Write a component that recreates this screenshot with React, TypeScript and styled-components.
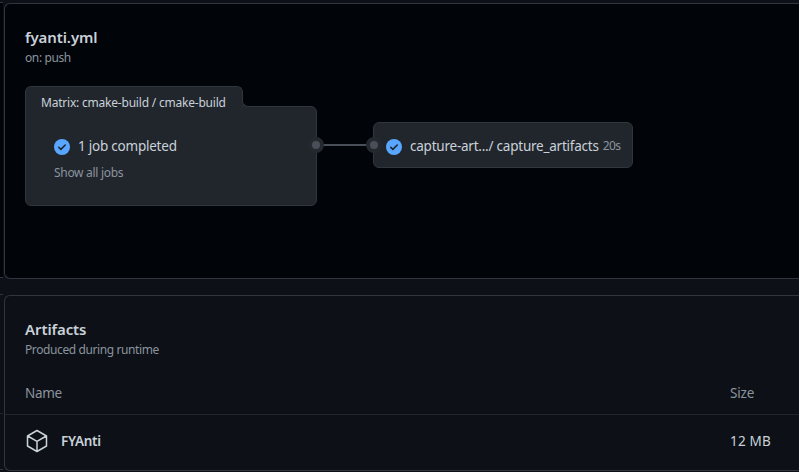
import React from 'react';
import styled, { createGlobalStyle } from 'styled-components';

const GlobalStyle = createGlobalStyle`
  * { box-sizing: border-box; }
  body {
    margin: 0;
    overflow: hidden;
    background: #0d1117;
    color: #c9d1d9;
    font-family: 'Noto Sans', sans-serif;
    font-size: 14px;
    line-height: 21px;
  }
`;

const Page = styled.main`
  display: flex;
  width: 799px;
  height: 472px;
  overflow: hidden;
`;

const Gutter = styled.div`
  flex: 0 0 3px;
  margin-right: 1px;
  padding-top: 2px;
`;

const GutterPanel = styled.div<{ $height: number; $dark?: boolean }>`
  height: ${p => p.$height}px;
  margin-bottom: 16px;
  border: solid #30363d;
  border-width: 1px 0;
  background: ${p => (p.$dark ? '#010409' : 'transparent')};
`;

const GutterRule = styled.div`
  height: 119px;
  border-bottom: 1px solid #21262d;
`;

const Content = styled.div`
  flex: 1;
  min-width: 0;
  display: flex;
  flex-direction: column;
  gap: 16px;
  padding-top: 3px;
`;

const Card = styled.section<{ $height: number; $dark?: boolean }>`
  height: ${p => p.$height}px;
  flex: none;
  border: 1px solid #30363d;
  border-right: 0;
  border-radius: 6px 0 0 6px;
  background: ${p => (p.$dark ? '#010409' : '#0d1117')};
`;

const CardHeader = styled.header`
  padding: 21px 20px 0;
`;

const Title = styled.h2`
  margin: 0;
  font-size: 15px;
  line-height: 24px;
  letter-spacing: -0.1px;
  font-weight: 600;
`;

const Subtitle = styled.div`
  font-size: 12px;
  line-height: 18px;
  letter-spacing: -0.4px;
  color: #8b949e;
`;

const Graph = styled.div`
  display: flex;
  align-items: flex-start;
  padding: 19px 0 0 20px;
`;

const Matrix = styled.div`
  width: 292px;
`;

const MatrixTab = styled.div`
  position: relative;
  z-index: 1;
  width: 218px;
  height: 21px;
  margin-bottom: -1px;
  padding: 0 15px;
  border: 1px solid #30363d;
  border-bottom: 0;
  border-radius: 6px 6px 0 0;
  background: #21262d;
  font-size: 12px;
  line-height: 32px;
  letter-spacing: -0.21px;
  white-space: nowrap;

  &::after {
    content: '';
    position: absolute;
    left: 216px;
    bottom: 0;
    width: 6px;
    height: 6px;
    border: solid #30363d;
    border-width: 0 0 1px 1px;
    border-radius: 0 0 0 6px;
    background: #010409;
    box-shadow: -1px 1px 0 0 #21262d;
    clip-path: inset(0);
  }
`;

const MatrixBody = styled.div`
  position: relative;
  height: 100px;
  padding: 29px 28px 0;
  border: 1px solid #30363d;
  border-radius: 0 6px 6px 6px;
  background: #21262d;
`;

const JobLine = styled.div`
  display: flex;
  align-items: center;
  white-space: nowrap;
  font-size: 13.5px;
  letter-spacing: -0.23px;

  svg { flex: none; margin-right: 8px; }
`;

const ShowAll = styled.div`
  margin-top: 7px;
  font-size: 12px;
  line-height: 18px;
  letter-spacing: -0.3px;
  color: #8b949e;
`;

const Port = styled.span<{ $side: 'left' | 'right'; $top: number }>`
  position: absolute;
  ${p => p.$side}: -8px;
  top: ${p => p.$top}px;
  width: 16px;
  height: 16px;
  border: 4px solid #24292f;
  border-radius: 50%;
  background: #484f58;
`;

const Connector = styled.div`
  width: 56px;
  height: 2px;
  margin-top: 58px;
  background: #484f58;
`;

const JobCard = styled.div`
  position: relative;
  display: flex;
  align-items: center;
  width: 260px;
  height: 46px;
  margin-top: 36px;
  padding: 3px 12px 0;
  border: 1px solid #30363d;
  border-radius: 6px;
  background: #21262d;
`;

const Duration = styled.span`
  margin: -2px 0 0 4px;
  font-size: 12px;
  letter-spacing: -0.6px;
  color: #8b949e;
`;

const Row = styled.div<{ $header?: boolean }>`
  display: flex;
  align-items: center;
  height: ${p => (p.$header ? 43 : 55)}px;
  margin-top: ${p => (p.$header ? 13 : 0)}px;
  padding: 0 0 ${p => (p.$header ? 0 : 2)}px 20px;
  border-bottom: ${p => (p.$header ? '1px solid #21262d' : '0')};
  color: ${p => (p.$header ? '#8b949e' : '#c9d1d9')};
  font-size: 13.5px;

  svg { margin: -2px 12px 0 0; }
`;

const NameCell = styled.div<{ $strong?: boolean }>`
  flex: 1;
  display: flex;
  align-items: center;
  letter-spacing: -0.3px;
  font-weight: ${p => (p.$strong ? 600 : 400)};
`;

const SizeCell = styled.div<{ $wide?: boolean }>`
  width: 69px;
  letter-spacing: ${p => (p.$wide ? 0.2 : -0.2)}px;
`;

const CheckIcon = () => (
  <svg width="16" height="16" viewBox="0 0 16 16" fill="none">
    <circle cx="8" cy="8" r="8" fill="#58a6ff" />
    <path d="m4.75 8.3 2.1 2.1 4.4-4.4" stroke="#21262d" strokeWidth="1.6" strokeLinecap="round" strokeLinejoin="round" />
  </svg>
);

const PackageIcon = () => (
  <svg width="24" height="24" viewBox="0 0 24 24" fill="none" stroke="#c9d1d9" strokeWidth="1.5" strokeLinejoin="round">
    <path d="M12 1.5 21.5 7v10L12 22.5 2.5 17V7zM2.7 7 12 12.4 21.3 7M12 12.4v10" />
  </svg>
);

export default function App() {
  return (
    <>
      <GlobalStyle />
      <Page>
        <Gutter>
          <GutterPanel $height={276} $dark />
          <GutterPanel $height={176}>
            <GutterRule />
          </GutterPanel>
        </Gutter>
        <Content>
          <Card $height={276} $dark>
            <CardHeader>
              <Title>fyanti.yml</Title>
              <Subtitle>on: push</Subtitle>
            </CardHeader>
            <Graph>
              <Matrix>
                <MatrixTab>Matrix: cmake-build / cmake-build</MatrixTab>
                <MatrixBody>
                  <JobLine><CheckIcon />1 job completed</JobLine>
                  <ShowAll>Show all jobs</ShowAll>
                  <Port $side="right" $top={30} />
                </MatrixBody>
              </Matrix>
              <Connector />
              <JobCard>
                <Port $side="left" $top={14} />
                <JobLine><CheckIcon />capture-art.../ capture_artifacts</JobLine>
                <Duration>20s</Duration>
              </JobCard>
            </Graph>
          </Card>
          <Card $height={176}>
            <CardHeader>
              <Title>Artifacts</Title>
              <Subtitle>Produced during runtime</Subtitle>
            </CardHeader>
            <Row $header>
              <NameCell>Name</NameCell>
              <SizeCell>Size</SizeCell>
            </Row>
            <Row>
              <NameCell $strong><PackageIcon />FYAnti</NameCell>
              <SizeCell $wide>12 MB</SizeCell>
            </Row>
          </Card>
        </Content>
      </Page>
    </>
  );
}
